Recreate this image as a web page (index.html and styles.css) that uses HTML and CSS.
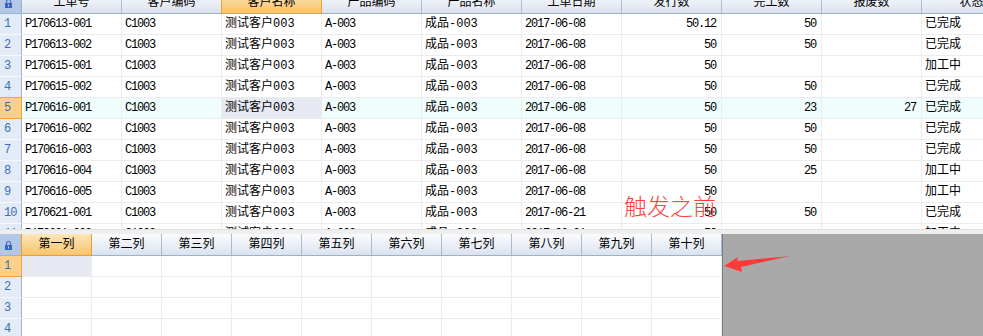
FILE: index.html
```html
<!DOCTYPE html>
<html lang="zh-CN">
<head>
  <meta charset="UTF-8">
  <title>工单表格</title>
  <link rel="stylesheet" href="styles.css">
</head>
<body>
  <div class="sheet-top">
    <div class="row head">
      <div class="cell rh corner">
        <svg class="lock" width="7" height="9" viewBox="0 0 7 9"><path d="M1.5 4V2.5a2 2 0 0 1 4 0V4" fill="none" stroke="#4a6fc4" stroke-width="1.2"/><rect x="0" y="4" width="7" height="5" fill="#3d64c0"/><rect x="3" y="5.5" width="1" height="2" fill="#c9d6f2"/></svg>
      </div>
      <div class="cell">工单号</div>
      <div class="cell">客户编码</div>
      <div class="cell sel">客户名称</div>
      <div class="cell">产品编码</div>
      <div class="cell">产品名称</div>
      <div class="cell">工单日期</div>
      <div class="cell">发行数</div>
      <div class="cell">完工数</div>
      <div class="cell">报废数</div>
      <div class="cell">状态</div>
    </div>

    <div class="row">
      <div class="cell rh">1</div>
      <div class="cell n">P170613-001</div><div class="cell n">C1003</div><div class="cell">测试客户003</div><div class="cell n">A-003</div><div class="cell">成品-003</div><div class="cell n">2017-06-08</div>
      <div class="cell n num">50.12</div><div class="cell n num">50</div><div class="cell n num"></div><div class="cell">已完成</div>
    </div>
    <div class="row">
      <div class="cell rh">2</div>
      <div class="cell n">P170613-002</div><div class="cell n">C1003</div><div class="cell">测试客户003</div><div class="cell n">A-003</div><div class="cell">成品-003</div><div class="cell n">2017-06-08</div>
      <div class="cell n num">50</div><div class="cell n num">50</div><div class="cell n num"></div><div class="cell">已完成</div>
    </div>
    <div class="row">
      <div class="cell rh">3</div>
      <div class="cell n">P170615-001</div><div class="cell n">C1003</div><div class="cell">测试客户003</div><div class="cell n">A-003</div><div class="cell">成品-003</div><div class="cell n">2017-06-08</div>
      <div class="cell n num">50</div><div class="cell n num"></div><div class="cell n num"></div><div class="cell">加工中</div>
    </div>
    <div class="row">
      <div class="cell rh">4</div>
      <div class="cell n">P170615-002</div><div class="cell n">C1003</div><div class="cell">测试客户003</div><div class="cell n">A-003</div><div class="cell">成品-003</div><div class="cell n">2017-06-08</div>
      <div class="cell n num">50</div><div class="cell n num">50</div><div class="cell n num"></div><div class="cell">已完成</div>
    </div>
    <div class="row current">
      <div class="cell rh">5</div>
      <div class="cell n">P170616-001</div><div class="cell n">C1003</div><div class="cell focus">测试客户003</div><div class="cell n">A-003</div><div class="cell">成品-003</div><div class="cell n">2017-06-08</div>
      <div class="cell n num">50</div><div class="cell n num">23</div><div class="cell n num">27</div><div class="cell">已完成</div>
    </div>
    <div class="row">
      <div class="cell rh">6</div>
      <div class="cell n">P170616-002</div><div class="cell n">C1003</div><div class="cell">测试客户003</div><div class="cell n">A-003</div><div class="cell">成品-003</div><div class="cell n">2017-06-08</div>
      <div class="cell n num">50</div><div class="cell n num">50</div><div class="cell n num"></div><div class="cell">已完成</div>
    </div>
    <div class="row">
      <div class="cell rh">7</div>
      <div class="cell n">P170616-003</div><div class="cell n">C1003</div><div class="cell">测试客户003</div><div class="cell n">A-003</div><div class="cell">成品-003</div><div class="cell n">2017-06-08</div>
      <div class="cell n num">50</div><div class="cell n num">50</div><div class="cell n num"></div><div class="cell">已完成</div>
    </div>
    <div class="row">
      <div class="cell rh">8</div>
      <div class="cell n">P170616-004</div><div class="cell n">C1003</div><div class="cell">测试客户003</div><div class="cell n">A-003</div><div class="cell">成品-003</div><div class="cell n">2017-06-08</div>
      <div class="cell n num">50</div><div class="cell n num">25</div><div class="cell n num"></div><div class="cell">加工中</div>
    </div>
    <div class="row">
      <div class="cell rh">9</div>
      <div class="cell n">P170616-005</div><div class="cell n">C1003</div><div class="cell">测试客户003</div><div class="cell n">A-003</div><div class="cell">成品-003</div><div class="cell n">2017-06-08</div>
      <div class="cell n num">50</div><div class="cell n num"></div><div class="cell n num"></div><div class="cell">加工中</div>
    </div>
    <div class="row">
      <div class="cell rh">10</div>
      <div class="cell n">P170621-001</div><div class="cell n">C1003</div><div class="cell">测试客户003</div><div class="cell n">A-003</div><div class="cell">成品-003</div><div class="cell n">2017-06-21</div>
      <div class="cell n num">50</div><div class="cell n num">50</div><div class="cell n num"></div><div class="cell">已完成</div>
    </div>
    <div class="row">
      <div class="cell rh">11</div>
      <div class="cell n">P170621-002</div><div class="cell n">C1003</div><div class="cell">测试客户003</div><div class="cell n">A-003</div><div class="cell">成品-003</div><div class="cell n">2017-06-21</div>
      <div class="cell n num">50</div><div class="cell n num"></div><div class="cell n num"></div><div class="cell">加工中</div>
    </div>
  </div>

  <div class="split"></div>

  <div class="sheet-bottom">
    <div class="grid2">
      <div class="row head2">
        <div class="cell rh corner">
          <svg class="lock" width="7" height="9" viewBox="0 0 7 9"><path d="M1.5 4V2.5a2 2 0 0 1 4 0V4" fill="none" stroke="#4a6fc4" stroke-width="1.2"/><rect x="0" y="4" width="7" height="5" fill="#3d64c0"/><rect x="3" y="5.5" width="1" height="2" fill="#c9d6f2"/></svg>
        </div>
        <div class="cell sel">第一列</div>
        <div class="cell">第二列</div>
        <div class="cell">第三列</div>
        <div class="cell">第四列</div>
        <div class="cell">第五列</div>
        <div class="cell">第六列</div>
        <div class="cell">第七列</div>
        <div class="cell">第八列</div>
        <div class="cell">第九列</div>
        <div class="cell">第十列</div>
      </div>
      <div class="row current2">
        <div class="cell rh">1</div>
        <div class="cell focus"></div><div class="cell"></div><div class="cell"></div><div class="cell"></div><div class="cell"></div>
        <div class="cell"></div><div class="cell"></div><div class="cell"></div><div class="cell"></div><div class="cell"></div>
      </div>
      <div class="row">
        <div class="cell rh">2</div>
        <div class="cell"></div><div class="cell"></div><div class="cell"></div><div class="cell"></div><div class="cell"></div>
        <div class="cell"></div><div class="cell"></div><div class="cell"></div><div class="cell"></div><div class="cell"></div>
      </div>
      <div class="row">
        <div class="cell rh">3</div>
        <div class="cell"></div><div class="cell"></div><div class="cell"></div><div class="cell"></div><div class="cell"></div>
        <div class="cell"></div><div class="cell"></div><div class="cell"></div><div class="cell"></div><div class="cell"></div>
      </div>
      <div class="row">
        <div class="cell rh">4</div>
        <div class="cell"></div><div class="cell"></div><div class="cell"></div><div class="cell"></div><div class="cell"></div>
        <div class="cell"></div><div class="cell"></div><div class="cell"></div><div class="cell"></div><div class="cell"></div>
      </div>
    </div>
    <div class="empty-area"></div>
  </div>

  <!-- annotation over the screenshot -->
  <div class="note">触发之前</div>
  <svg class="arrow" width="70" height="22" viewBox="0 0 70 22">
    <polygon points="2,16 16,7 15,11 68,6 19,17 20,22" fill="#ff3a3a"/>
  </svg>
</body>
</html>
```

FILE: styles.css
```css
body {
  margin: 0;
  width: 983px;
  height: 336px;
  overflow: hidden;
  position: relative;
  background: #fff;
  color: #000;
  font-family: "Liberation Mono", "Noto Sans CJK SC", monospace;
  font-size: 12px;
}

.sheet-top {
  height: 229px;
  overflow: hidden;
}

.row {
  display: flex;
  height: 21px;
}

.cell {
  flex: 0 0 100px;
  box-sizing: border-box;
  height: 21px;
  padding: 1px 3px 0;
  line-height: 19px;
  border-right: 1px solid #ececec;
  border-bottom: 1px solid #ececec;
  white-space: nowrap;
  overflow: hidden;
}

.n {
  letter-spacing: -1.2px;
}

.num {
  text-align: right;
  padding-right: 5px;
}

/* row header column */
.rh {
  flex: 0 0 22px;
  padding: 1px 0 0 4px;
  background: #e3ebf6;
  color: #3a70ad;
  border-right: 1px solid #9fb5ce;
  border-bottom: 1px solid #f5f8fc;
  letter-spacing: -1px;
}

/* column headers */
.head {
  height: 22px;
  margin-top: -8px;
}

.head .cell,
.head2 .cell {
  height: 22px;
  padding-top: 2px;
  line-height: 19px;
  text-align: center;
  background: linear-gradient(#fbfcfe, #dbe2ee);
  border-right: 1px solid #a9bcd3;
  border-bottom: 1px solid #9cb1ca;
}

.head .rh.corner,
.head2 .rh.corner {
  background: #b3c8e6;
  padding: 0;
  text-align: left;
  border-right: 1px solid #9cb1ca;
}

.lock {
  display: block;
  margin: 7px 0 0 5px;
}

.head .cell.sel,
.head2 .cell.sel {
  background: linear-gradient(#fde6b9, #f7c46c);
  border-right-color: #f09c34;
  border-bottom-color: #f09c34;
  box-shadow: -1px 0 0 #f09c34;
}

.current .cell {
  background: #f0fdfd;
}

.current .rh,
.current2 .rh {
  background: #fcd08a;
  border-right-color: #f3a23c;
  border-bottom: 1px solid #f3a23c;
  box-shadow: 0 -1px 0 #f3a23c;
}

.cell.focus,
.current .cell.focus {
  background: #e7e9f2;
}

.split {
  height: 5px;
  background: #efefef;
  border-top: 1px solid #e0e0e0;
  box-sizing: border-box;
}

/* lower sheet */
.sheet-bottom {
  display: flex;
  height: 102px;
}

.grid2 {
  flex: 0 0 722px;
  overflow: hidden;
}

.grid2 .cell {
  flex-basis: 70px;
}

.grid2 .rh {
  flex-basis: 22px;
}

.head2 {
  height: 22px;
}

.empty-area {
  flex: 1;
  background: #a9a9a9;
  border-left: 1px solid #7c7c7c;
}

/* red annotation */
.note {
  position: absolute;
  left: 624px;
  top: 188px;
  color: #ff4040;
  font-family: "Noto Sans CJK SC", sans-serif;
  font-weight: 300;
  font-size: 23px;
  letter-spacing: 0;
}

.arrow {
  position: absolute;
  left: 722px;
  top: 250px;
}
```
